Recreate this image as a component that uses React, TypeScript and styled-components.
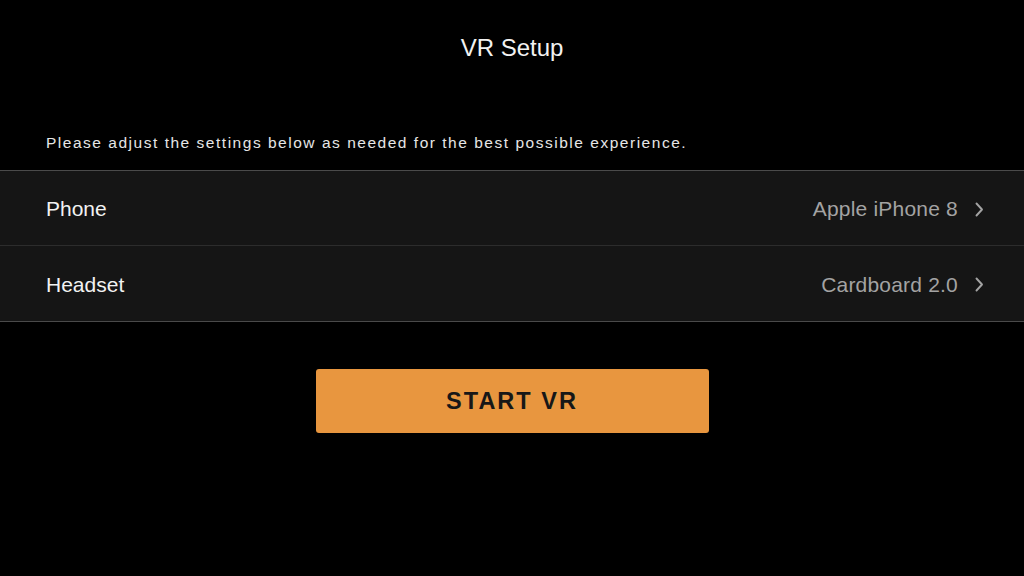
import styled, { createGlobalStyle } from "styled-components";

const GlobalStyle = createGlobalStyle`
  html, body {
    margin: 0;
    padding: 0;
    background-color: #000;
  }

  body {
    font-family: "Liberation Sans", Arial, sans-serif;
    color: #fff;
  }
`;

const Page = styled.div`
  width: 1024px;
  height: 576px;
  background-color: #000;

  display: flex;
  flex-direction: column;
`;

const Title = styled.div`
  height: 96px;
  line-height: 96px;

  font-size: 24px;
  text-align: center;
  color: #f2f2f2;
`;

const Intro = styled.div`
  padding: 37px 46px 0;
  height: 74px;
  line-height: 20px;
  box-sizing: border-box;

  font-size: 15.5px;
  letter-spacing: 1.52px;
  color: #e6e6e6;
`;

const List = styled.div`
  background-color: #151515;
  border-top: 1px solid #4a4a4a;
  border-bottom: 1px solid #4a4a4a;
`;

const Row = styled.div`
  height: 75px;
  padding: 2px 40px 0 46px;
  box-sizing: border-box;

  display: flex;
  align-items: center;
  justify-content: space-between;

  border-bottom: 1px solid #2c2c2c;

  &:last-child {
    border-bottom: none;
  }
`;

const Label = styled.div`
  font-size: 21px;
  color: #f2f2f2;
`;

const Value = styled.div`
  display: flex;
  align-items: center;
  gap: 15px;

  font-size: 21px;
  letter-spacing: 0.2px;
  color: #a3a3a3;
`;

const Chevron = styled.svg`
  width: 11px;
  height: 15px;
`;

const ButtonWrapper = styled.div`
  padding-top: 47px;

  display: flex;
  justify-content: center;
`;

const StartButton = styled.button`
  width: 393px;
  height: 64px;

  background-color: #e8963f;
  border: none;
  border-radius: 3px;

  font-family: "Liberation Sans", Arial, sans-serif;
  font-size: 23.5px;
  font-weight: bold;
  letter-spacing: 2px;
  color: #171717;
`;

const settings = [
  { name: "Phone", value: "Apple iPhone 8" },
  { name: "Headset", value: "Cardboard 2.0" },
];

const App = () => {
  return (
    <>
      <GlobalStyle />
      <Page>
        <Title>VR Setup</Title>
        <Intro>
          Please adjust the settings below as needed for the best possible
          experience.
        </Intro>
        <List>
          {settings.map((item) => (
            <Row key={item.name}>
              <Label>{item.name}</Label>
              <Value>
                {item.value}
                <Chevron viewBox="0 0 11 15">
                  <path
                    d="M3.5 1.5 L9 7.5 L3.5 13.5"
                    fill="none"
                    stroke="#a3a3a3"
                    strokeWidth="1.9"
                    strokeLinecap="round"
                    strokeLinejoin="round"
                  />
                </Chevron>
              </Value>
            </Row>
          ))}
        </List>
        <ButtonWrapper>
          <StartButton>START VR</StartButton>
        </ButtonWrapper>
      </Page>
    </>
  );
};

export default App;
